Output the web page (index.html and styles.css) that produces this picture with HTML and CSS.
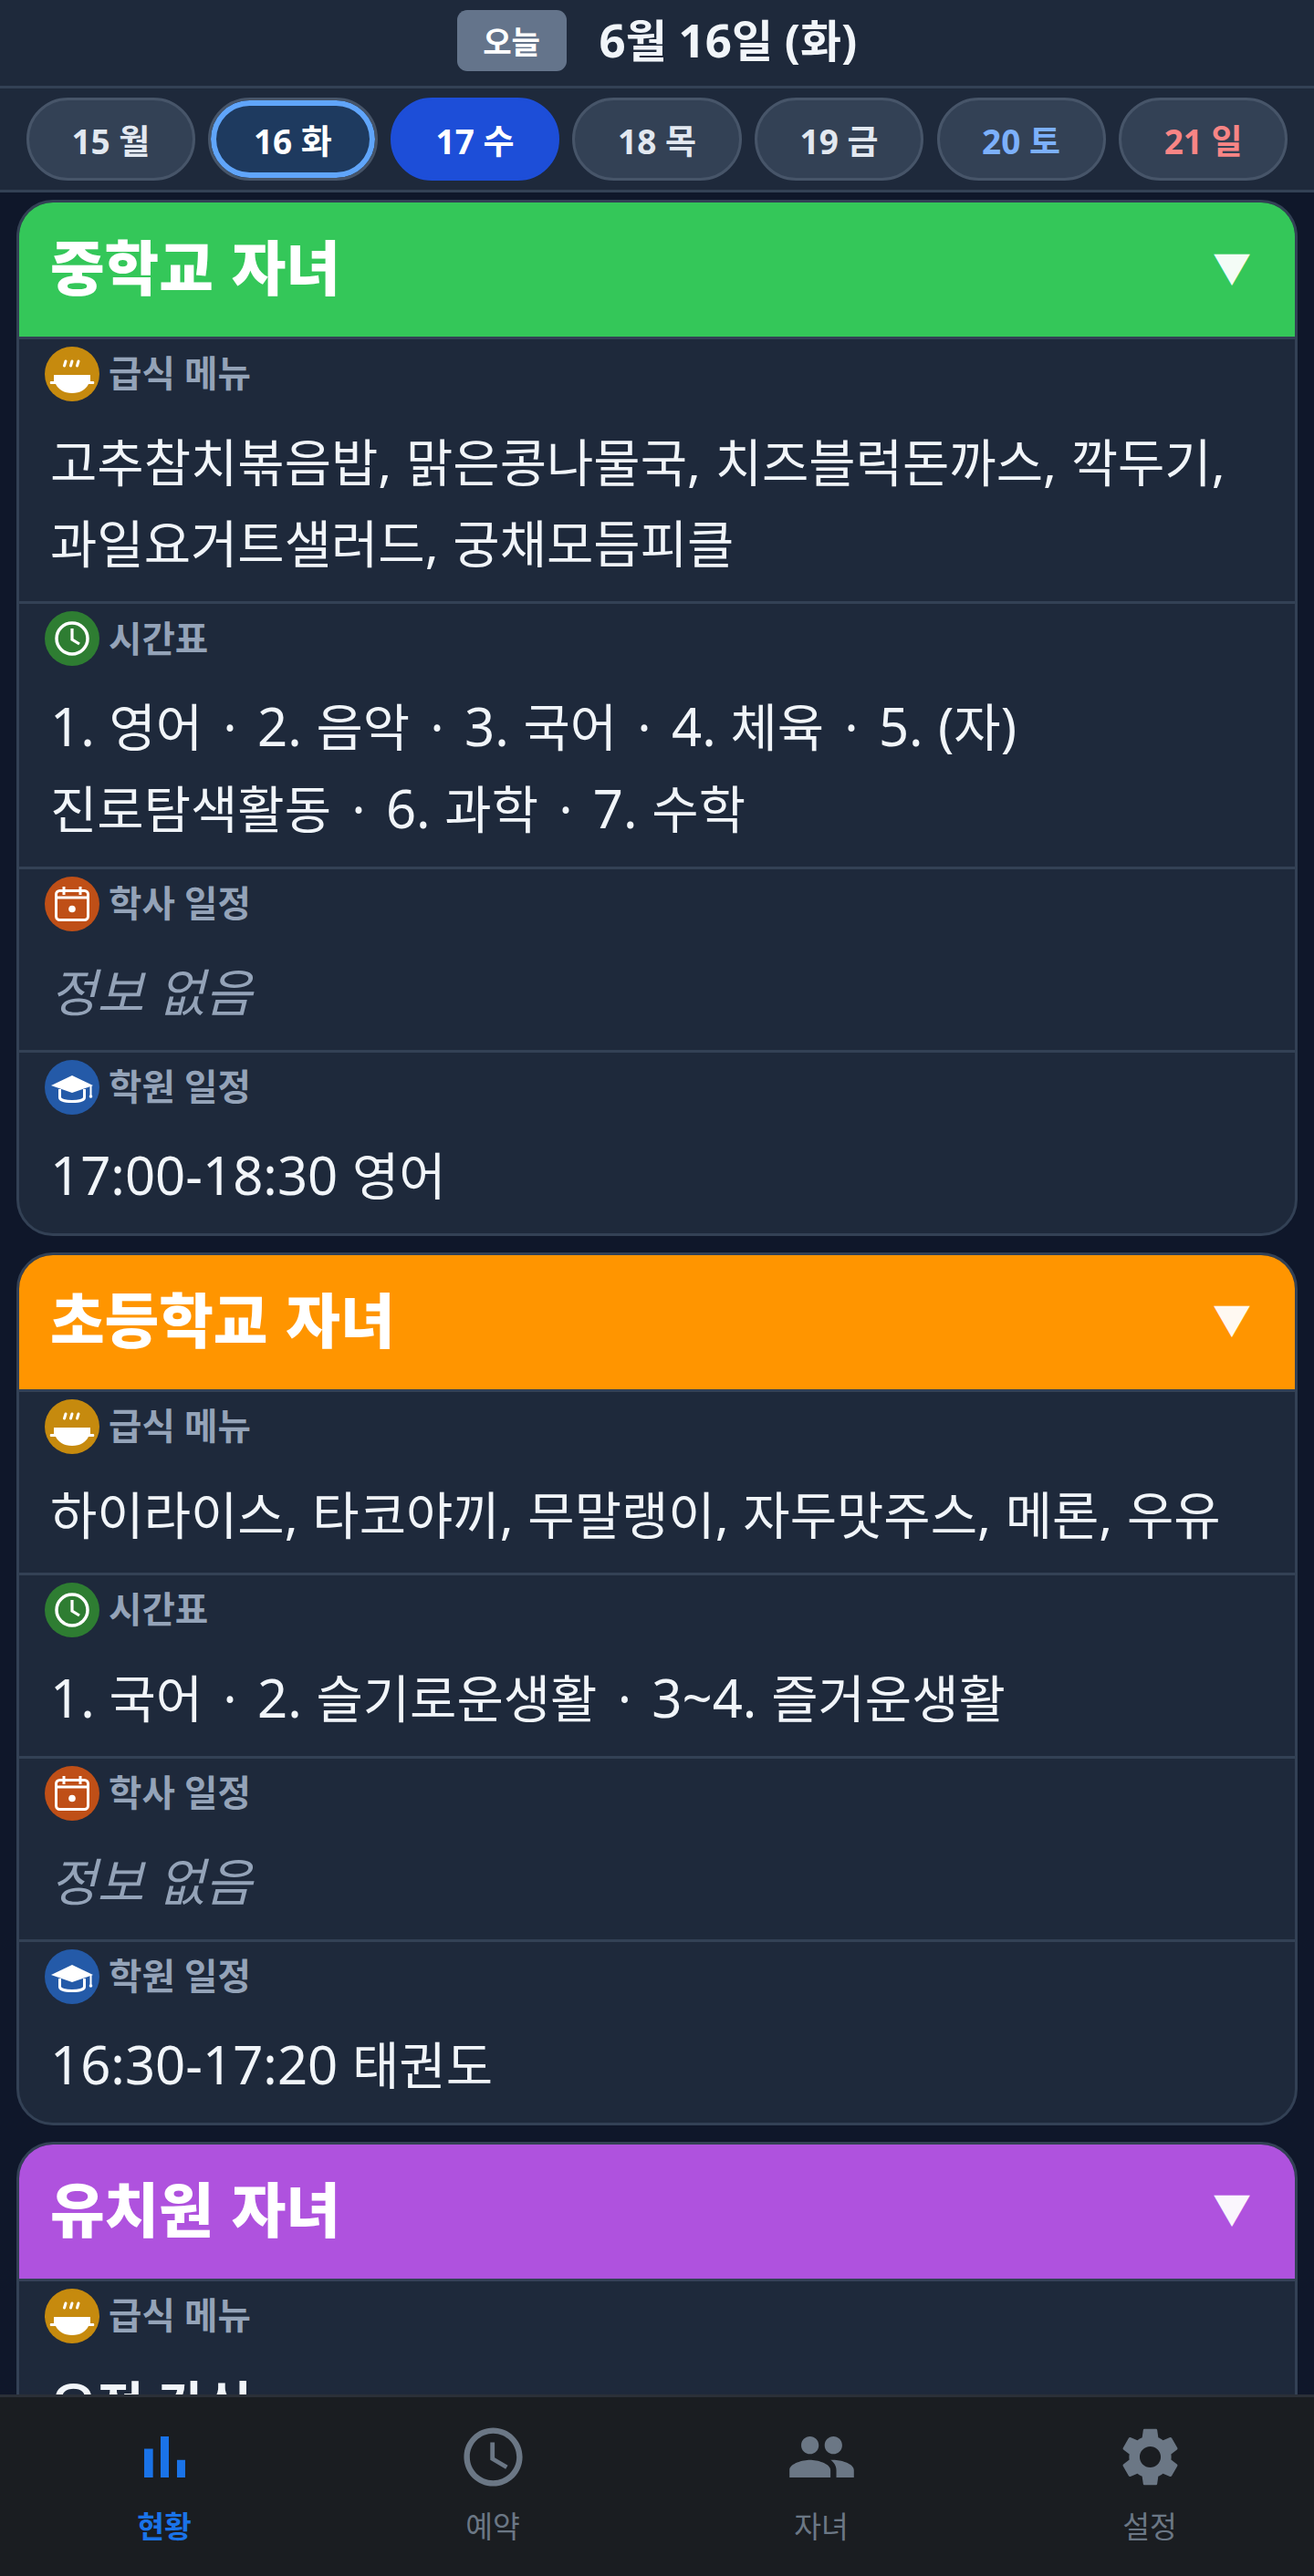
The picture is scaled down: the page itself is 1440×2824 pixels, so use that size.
FILE: index.html
```html
<!DOCTYPE html>
<html lang="ko">
<head>
<meta charset="utf-8">
<title>현황</title>
<link rel="stylesheet" href="styles.css">
</head>
<body>
<svg class="defs" width="0" height="0" aria-hidden="true">
  <symbol id="i-food" viewBox="0 0 60 60">
    <g stroke="#fff" stroke-width="3" stroke-linecap="round" fill="none">
      <path d="M21.500 21l1.500-5M28.500 21l1.500-5M35.500 21l1.500-5"/>
    </g>
    <path fill="#fff" d="M10 31h40v7h3.500c1 0 1 3 0 3H48c-3 6-9 10-18 10s-15-4-18-10H6.500c-1 0-1-3 0-3H10z"/>
  </symbol>
  <symbol id="i-clock" viewBox="0 0 60 60">
    <circle cx="30" cy="30" r="17" fill="none" stroke="#fff" stroke-width="3.500"/>
    <path d="M30 19v12l8 5" fill="none" stroke="#fff" stroke-width="3.200"/>
  </symbol>
  <symbol id="i-cal" viewBox="0 0 60 60">
    <rect x="12.500" y="15.500" width="35" height="32" rx="4" fill="none" stroke="#fff" stroke-width="3"/>
    <path d="M12 23h36" stroke="#fff" stroke-width="3"/>
    <path d="M21 11v9M39 11v9" stroke="#fff" stroke-width="3"/>
    <circle cx="30" cy="35.500" r="3.800" fill="#fff"/>
  </symbol>
  <symbol id="i-cap" viewBox="0 0 60 60">
    <path fill="#fff" d="M30 17L53 28 30 36 7 28z"/>
    <path fill="none" stroke="#fff" stroke-width="3" d="M16.500 32v9c0 6 27 6 27 0v-9"/>
    <path stroke="#fff" stroke-width="2" d="M50.500 28v11"/>
    <circle cx="50.500" cy="40" r="1.800" fill="#fff"/>
  </symbol>
</svg>
<div class="app">
  <header class="top">
    <span class="today">오늘</span>
    <span class="date"><span class="num">6</span>월 <span class="num">16</span>일 <span class="num">(</span>화<span class="num">)</span></span>
  </header>
  <nav class="days">
    <span class="day">15 월</span>
    <span class="day day-current">16 화</span>
    <span class="day day-selected">17 수</span>
    <span class="day">18 목</span>
    <span class="day">19 금</span>
    <span class="day day-sat">20 토</span>
    <span class="day day-sun">21 일</span>
  </nav>
  <main class="feed">
    <article class="card">
      <div class="card-head green"><h2>중학교 자녀</h2><span class="tri">▼</span></div>
      <section class="row">
        <div class="label"><span class="badge food"><svg><use href="#i-food"/></svg></span>급식 메뉴</div>
        <p class="val">고추참치볶음밥, 맑은콩나물국, 치즈블럭돈까스, 깍두기, 과일요거트샐러드, 궁채모듬피클</p>
      </section>
      <section class="row">
        <div class="label"><span class="badge time"><svg><use href="#i-clock"/></svg></span>시간표</div>
        <p class="val"><span class="num">1.</span> 영어<span class="sep"> · </span><span class="num">2.</span> 음악<span class="sep"> · </span><span class="num">3.</span> 국어<span class="sep"> · </span><span class="num">4.</span> 체육<span class="sep"> · </span><span class="num">5. (</span>자<span class="num">)</span> 진로탐색활동<span class="sep"> · </span><span class="num">6.</span> 과학<span class="sep"> · </span><span class="num">7.</span> 수학</p>
      </section>
      <section class="row">
        <div class="label"><span class="badge cal"><svg><use href="#i-cal"/></svg></span>학사 일정</div>
        <p class="val none">정보 없음</p>
      </section>
      <section class="row">
        <div class="label"><span class="badge acad"><svg><use href="#i-cap"/></svg></span>학원 일정</div>
        <p class="val"><span class="num">17:00-18:30</span> 영어</p>
      </section>
    </article>
    <article class="card">
      <div class="card-head orange"><h2>초등학교 자녀</h2><span class="tri">▼</span></div>
      <section class="row">
        <div class="label"><span class="badge food"><svg><use href="#i-food"/></svg></span>급식 메뉴</div>
        <p class="val">하이라이스, 타코야끼, 무말랭이, 자두맛주스, 메론, 우유</p>
      </section>
      <section class="row">
        <div class="label"><span class="badge time"><svg><use href="#i-clock"/></svg></span>시간표</div>
        <p class="val"><span class="num">1.</span> 국어<span class="sep"> · </span><span class="num">2.</span> 슬기로운생활<span class="sep"> · </span><span class="num">3~4.</span> 즐거운생활</p>
      </section>
      <section class="row">
        <div class="label"><span class="badge cal"><svg><use href="#i-cal"/></svg></span>학사 일정</div>
        <p class="val none">정보 없음</p>
      </section>
      <section class="row">
        <div class="label"><span class="badge acad"><svg><use href="#i-cap"/></svg></span>학원 일정</div>
        <p class="val"><span class="num">16:30-17:20</span> 태권도</p>
      </section>
    </article>
    <article class="card">
      <div class="card-head purple"><h2>유치원 자녀</h2><span class="tri">▼</span></div>
      <section class="row">
        <div class="label"><span class="badge food"><svg><use href="#i-food"/></svg></span>급식 메뉴</div>
        <p class="val val-strong">오전 간식</p>
      </section>
    </article>
  </main>
  <footer class="tabs">
    <div class="tab tab-on">
      <svg viewBox="0 0 24 24"><path d="M5 9.200h3V19H5zM10.600 5h2.800v14h-2.800zm5.600 8H19v6h-2.800z"/></svg>
      <span>현황</span>
    </div>
    <div class="tab">
      <svg viewBox="0 0 24 24"><path d="M11.990 2C6.470 2 2 6.480 2 12s4.470 10 9.990 10C17.520 22 22 17.520 22 12S17.520 2 11.990 2zM12 20c-4.420 0-8-3.580-8-8s3.580-8 8-8 8 3.580 8 8-3.580 8-8 8zm.5-13H11v6l5.250 3.150.75-1.230-4.500-2.670z"/></svg>
      <span>예약</span>
    </div>
    <div class="tab">
      <svg viewBox="0 0 24 24"><path d="M16 11c1.660 0 2.990-1.340 2.990-3S17.660 5 16 5c-1.660 0-3 1.340-3 3s1.340 3 3 3zm-8 0c1.660 0 2.990-1.340 2.990-3S9.660 5 8 5C6.340 5 5 6.340 5 8s1.340 3 3 3zm0 2c-2.330 0-7 1.170-7 3.500V19h14v-2.500c0-2.330-4.670-3.500-7-3.500zm8 0c-.29 0-.62.02-.97.05 1.160.84 1.970 1.970 1.970 3.450V19h6v-2.500c0-2.330-4.670-3.500-7-3.500z"/></svg>
      <span>자녀</span>
    </div>
    <div class="tab">
      <svg viewBox="0 0 24 24"><path d="M19.140 12.940c.04-.3.06-.61.06-.94 0-.32-.02-.64-.07-.94l2.030-1.580c.18-.14.23-.41.12-.61l-1.920-3.320c-.12-.22-.37-.29-.59-.22l-2.390.96c-.5-.38-1.030-.7-1.620-.94l-.36-2.540c-.04-.24-.24-.41-.48-.41h-3.840c-.24 0-.43.17-.47.41l-.36 2.540c-.59.24-1.130.57-1.620.94l-2.390-.96c-.22-.08-.47 0-.59.22L2.740 8.870c-.12.21-.08.47.12.61l2.030 1.580c-.05.3-.09.63-.09.94s.02.64.07.94l-2.030 1.580c-.18.14-.23.41-.12.61l1.920 3.320c.12.22.37.29.59.22l2.390-.96c.5.38 1.030.7 1.620.94l.36 2.540c.05.24.24.41.48.41h3.840c.24 0 .44-.17.47-.41l.36-2.540c.59-.24 1.130-.56 1.620-.94l2.390.96c.22.08.47 0 .59-.22l1.920-3.320c.12-.22.07-.47-.12-.61l-2.010-1.580zM12 15.600c-1.980 0-3.600-1.620-3.600-3.600s1.620-3.600 3.600-3.600 3.600 1.620 3.600 3.600-1.620 3.600-3.600 3.600z"/></svg>
      <span>설정</span>
    </div>
  </footer>
</div>
</body>
</html>
```
FILE: styles.css
```css
* { box-sizing: border-box; }
html, body { margin: 0; padding: 0; height: 100%; }
body {
  background: #0f172a;
  font-family: "Noto Sans", "Noto Sans CJK KR", sans-serif;
  color: #f1f5f9;
  overflow: hidden;
}
.defs { position: absolute; }
.app { display: flex; flex-direction: column; height: 100vh; }
.num { font-size: 1.040em; line-height: 1; }

.top {
  flex: none;
  height: 97px;
  background: #1e293b;
  border-bottom: 3px solid #334155;
  display: flex;
  align-items: center;
  justify-content: center;
  gap: 36px;
  padding-bottom: 6px;
}
.today {
  width: 120px;
  height: 67px;
  background: #64748b;
  border-radius: 11px;
  display: flex;
  align-items: center;
  justify-content: center;
  font-size: 34.200px;
  font-weight: 700;
  color: #fff;
}
.date { font-size: 49px; font-weight: 700; line-height: 67px; }

.days {
  flex: none;
  height: 114px;
  background: #1e293b;
  border-bottom: 3px solid #334155;
  padding: 10px 28.800px;
  display: flex;
  gap: 14.400px;
}
.day {
  flex: 1;
  height: 91px;
  display: flex;
  align-items: center;
  justify-content: center;
  border: 3px solid #475569;
  border-radius: 46px;
  background: #334155;
  font-size: 37px;
  font-weight: 700;
  color: #e2e8f0;
}
.day-current { background: #1e3a5f; box-shadow: inset 0 0 0 6px #60a5fa; color: #fff; }
.day-selected { background: #1d4ed8; border-color: #1d4ed8; color: #fff; }
.day-sat { color: #7cb0fb; }
.day-sun { color: #f98585; }

.feed {
  flex: 1;
  min-height: 0;
  overflow: hidden;
  padding: 8px 18px 0;
  display: flex;
  flex-direction: column;
  gap: 17.400px;
}
.card {
  flex: none;
  background: #1e293b;
  border: 3px solid #334155;
  border-radius: 40px;
  overflow: hidden;
}
.card-head {
  height: 150px;
  border-bottom: 3px solid #334155;
  display: flex;
  align-items: center;
  justify-content: space-between;
  padding: 0 48px 4px 34px;
  color: #fff;
}
.card-head h2 { margin: 0; font-size: 64.800px; font-weight: 900; line-height: 1; word-spacing: 3px; }
.green { background: #34c759; }
.orange { background: #ff9500; }
.purple { background: #af52de; }
.tri { font-size: 42px; line-height: 1; opacity: .95; }

.row { padding: 8px 28px 18.900px; }
.row + .row { border-top: 3px solid #334155; }
.label {
  display: flex;
  align-items: center;
  gap: 10px;
  height: 60px;
  font-size: 39.600px;
  font-weight: 700;
  color: #94a3b8;
  line-height: 1;
}
.badge {
  flex: none;
  width: 60px;
  height: 60px;
  border-radius: 50%;
  display: block;
}
.badge svg { display: block; width: 60px; height: 60px; }
.food { background: #c68a0e; }
.time { background: #2e7d32; }
.cal { background: #bf4f17; }
.acad { background: #245aa8; }
.val {
  margin: 22px 0 0;
  padding-left: 6px;
  font-size: 55.800px;
  line-height: 89.280px;
  font-weight: 400;
  color: #f1f5f9;
  word-break: keep-all;
  word-spacing: 1.200px;
}
.val-strong { font-weight: 700; }
.sep { margin: 0 6.750px; }
.none { font-style: italic; color: #94a3b8; }

.tabs {
  flex: none;
  height: 199px;
  background: #1a1d21;
  border-top: 3px solid #2b3038;
  display: flex;
  padding-top: 27px;
}
.tab {
  flex: 1;
  display: flex;
  flex-direction: column;
  align-items: center;
  color: #6b7785;
  font-size: 32.400px;
  line-height: 44px;
}
.tab svg { width: 77px; height: 77px; fill: currentColor; display: block; margin-bottom: 15px; }
.tab-on { color: #1a73e8; font-weight: 700; }
```
